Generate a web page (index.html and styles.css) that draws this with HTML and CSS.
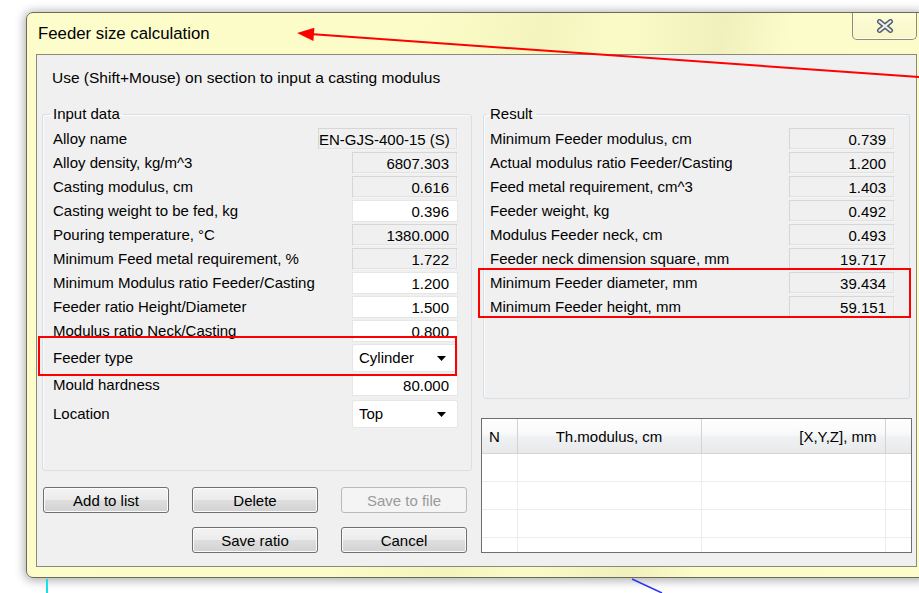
FILE: index.html
```html
<!DOCTYPE html>
<html lang="en">
<head>
<meta charset="utf-8">
<title>Feeder size calculation</title>
<link rel="stylesheet" href="styles.css">
</head>
<body>
<div class="desk">
  <div class="window">
    <div class="titlebar">
      <span class="title">Feeder size calculation</span>
      <button class="close" type="button" aria-label="Close">
        <svg width="18" height="14" viewBox="0 0 18 14">
          <path d="M3.5 2.5 L14.5 11.5 M14.5 2.5 L3.5 11.5" stroke="#56606b" stroke-width="5" stroke-linecap="round"/>
          <path d="M3.5 2.5 L14.5 11.5 M14.5 2.5 L3.5 11.5" stroke="#eef0f3" stroke-width="2.2" stroke-linecap="round"/>
        </svg>
      </button>
    </div>

    <div class="client">
      <p class="hint">Use (Shift+Mouse) on section to input a casting modulus</p>

      <div class="cols">
        <div class="col">
          <fieldset class="group input-group">
            <legend>Input data</legend>
            <div class="row"><span>Alloy name</span><span class="field ro wide">EN-GJS-400-15 (S)</span></div>
            <div class="row"><span>Alloy density, kg/m^3</span><span class="field ro">6807.303</span></div>
            <div class="row"><span>Casting modulus, cm</span><span class="field ro">0.616</span></div>
            <div class="row"><span>Casting weight to be fed, kg</span><span class="field">0.396</span></div>
            <div class="row"><span>Pouring temperature, °C</span><span class="field ro">1380.000</span></div>
            <div class="row"><span>Minimum Feed metal requirement, %</span><span class="field ro">1.722</span></div>
            <div class="row"><span>Minimum Modulus ratio Feeder/Casting</span><span class="field">1.200</span></div>
            <div class="row"><span>Feeder ratio Height/Diameter</span><span class="field">1.500</span></div>
            <div class="row"><span>Modulus ratio Neck/Casting</span><span class="field">0.800</span></div>
            <div class="row row-combo"><span>Feeder type</span>
              <span class="combo">Cylinder<svg class="drop" width="9" height="5" viewBox="0 0 9 5"><path d="M0 0 H9 L4.5 5 Z" fill="#000"/></svg></span>
            </div>
            <div class="row"><span>Mould hardness</span><span class="field">80.000</span></div>
            <div class="row row-combo row-last"><span>Location</span>
              <span class="combo">Top<svg class="drop" width="9" height="5" viewBox="0 0 9 5"><path d="M0 0 H9 L4.5 5 Z" fill="#000"/></svg></span>
            </div>
          </fieldset>

          <div class="buttons">
            <button type="button" class="btn b-add">Add to list</button>
            <button type="button" class="btn b-del">Delete</button>
            <button type="button" class="btn b-file" disabled>Save to file</button>
            <button type="button" class="btn b-ratio">Save ratio</button>
            <button type="button" class="btn b-cancel">Cancel</button>
          </div>
        </div>

        <div class="col">
          <fieldset class="group result-group">
            <legend>Result</legend>
            <div class="row"><span>Minimum Feeder modulus, cm</span><span class="field ro">0.739</span></div>
            <div class="row"><span>Actual modulus ratio Feeder/Casting</span><span class="field ro">1.200</span></div>
            <div class="row"><span>Feed metal requirement, cm^3</span><span class="field ro">1.403</span></div>
            <div class="row"><span>Feeder weight, kg</span><span class="field ro">0.492</span></div>
            <div class="row"><span>Modulus Feeder neck, cm</span><span class="field ro">0.493</span></div>
            <div class="row"><span>Feeder neck dimension square, mm</span><span class="field ro">19.717</span></div>
            <div class="row"><span>Minimum Feeder diameter, mm</span><span class="field ro">39.434</span></div>
            <div class="row"><span>Minimum Feeder height, mm</span><span class="field ro">59.151</span></div>
          </fieldset>

          <div class="list-wrap">
            <table class="list">
              <colgroup><col class="c-n"><col class="c-mod"><col class="c-xyz"><col class="c-end"></colgroup>
              <thead>
                <tr><th class="h-n">N</th><th class="h-mod">Th.modulus, cm</th><th class="h-xyz">[X,Y,Z], mm</th><th></th></tr>
              </thead>
              <tbody>
                <tr><td></td><td></td><td></td><td></td></tr>
                <tr><td></td><td></td><td></td><td></td></tr>
                <tr><td></td><td></td><td></td><td></td></tr>
                <tr><td></td><td></td><td></td><td></td></tr>
              </tbody>
            </table>
          </div>
        </div>
      </div>

      <div class="mark mark-feeder"></div>
      <div class="mark mark-result"></div>
    </div>
  </div>

  <svg class="notes" width="919" height="593" viewBox="0 0 919 593">
    <line x1="930" y1="77.8" x2="310" y2="34" stroke="#ff0000" stroke-width="2"/>
    <polygon points="297,33 314.4,27.8 313.4,41" fill="#ff0000"/>
    <line x1="47" y1="579" x2="47" y2="593" stroke="#18e0e6" stroke-width="2"/>
    <line x1="632" y1="579" x2="662" y2="593" stroke="#2a36f0" stroke-width="1.5"/>
  </svg>
</div>
</body>
</html>
```

FILE: styles.css
```css
html, body {
  margin: 0;
  padding: 0;
}

body {
  width: 919px;
  height: 593px;
  overflow: hidden;
  background: #ffffff;
  font-family: "Liberation Sans", Arial, sans-serif;
  font-size: 15px;
  color: #000;
}

.desk {
  position: relative;
  width: 919px;
  height: 593px;
  box-sizing: border-box;
  padding: 12px 0 0 26px;
}

/* dialog frame */
.window {
  width: 900px;
  height: 566px;
  box-sizing: border-box;
  border: 1px solid #6b6b5a;
  border-radius: 7px;
  padding: 0 8px 10px 9px;
  display: flex;
  flex-direction: column;
  background: linear-gradient(100deg,
    #fdfdcb 0%, #fcfcc8 40%, #f4f4be 52%, #fbfbc8 60%,
    #eff0bb 70%, #fcfccb 77%, #fdfdcc 100%);
  box-shadow: 0 1px 10px 2px rgba(0, 0, 0, 0.3);
}

.titlebar {
  height: 41px;
  display: flex;
  align-items: center;
  padding-left: 2px;
}

.title {
  font-size: 16.8px;
  line-height: 20px;
  margin-top: 1px;
}

.close {
  margin-left: auto;
  align-self: flex-start;
  width: 65px;
  height: 27px;
  padding: 0;
  box-sizing: border-box;
  border: 1px solid #8e8d7a;
  border-top: none;
  border-radius: 0 0 5px 5px;
  background: linear-gradient(#fdfdd8, #f7f7c9);
  box-shadow: inset 0 -1px 0 #fffff0;
  display: flex;
  align-items: center;
  justify-content: center;
}

/* client area */
.client {
  position: relative;
  flex: 1;
  border: 1px solid #8a8a7a;
  background: #f0f0f0;
  padding: 0 4px 0 5px;
}

.hint {
  margin: 14px 0 0 10px;
  font-size: 15.5px;
  line-height: 18px;
}

.cols {
  display: grid;
  grid-template-columns: 430px 431px;
  column-gap: 9px;
  margin-top: 18px;
}

.col {
  display: flex;
  flex-direction: column;
}

.group {
  margin: 0;
  min-width: 0;
  box-sizing: border-box;
  border: 1px solid #d5dfe5;
  border-radius: 3px;
  box-shadow: inset 1px 1px 0 #fbfbfb;
}

.group legend {
  padding: 0 3px;
  margin-left: -3px;
  line-height: 18px;
}

.input-group {
  height: 366px;
  padding: 5px 13px 0 10px;
}

.result-group {
  height: 294px;
  margin: 0 2px;
  padding: 5px 14px 0 6px;
}

.row {
  display: flex;
  justify-content: space-between;
  align-items: center;
  height: 22px;
  margin-bottom: 2px;
  line-height: 18px;
  white-space: nowrap;
}

.row > span:first-child {
  margin-top: -1px;
}

.row-combo {
  height: 28px;
}

.row-last {
  margin-top: 4px;
}

.field {
  width: 106px;
  height: 22px;
  box-sizing: border-box;
  padding-right: 8px;
  text-align: right;
  line-height: 21px;
  background: #ffffff;
  border: 1px solid #e6e6e6;
}

.field.ro {
  background: #f0f0f0;
  border-color: #d6d6d6 #f4f4f4 #f4f4f4 #d6d6d6;
  box-shadow: inset -1px -1px 0 #e2e2e2;
}

.field.wide {
  width: 140px;
}

.combo {
  width: 106px;
  height: 28px;
  box-sizing: border-box;
  padding: 0 11px 0 6px;
  display: flex;
  align-items: center;
  justify-content: space-between;
  background: #ffffff;
  border: 1px solid #e6e6e6;
  border-radius: 2px;
}

/* buttons */
.buttons {
  display: grid;
  grid-template-columns: repeat(3, 126px);
  grid-auto-rows: 26px;
  column-gap: 23px;
  row-gap: 14px;
  margin-top: 16px;
  padding-left: 1px;
}

.btn {
  height: 26px;
  padding: 0;
  font-family: "Liberation Sans", Arial, sans-serif;
  font-size: 15px;
  color: #000;
  border: 1px solid #707070;
  border-radius: 3px;
  background: linear-gradient(#f3f3f3 0%, #ececec 48%, #dedede 52%, #d2d2d2 100%);
  box-shadow: inset 0 0 0 1px #fbfbfb;
}

.btn:disabled {
  color: #9a9a9a;
  border-color: #b7babc;
  background: #f4f4f4;
  box-shadow: none;
}

.b-ratio { grid-column: 2; grid-row: 2; }
.b-cancel { grid-column: 3; grid-row: 2; }

/* list of saved feeders */
.list-wrap {
  margin-top: 19px;
  height: 135px;
  box-sizing: border-box;
  border: 1px solid #6e6e6e;
  background: #ffffff;
  overflow: hidden;
}

.list {
  width: 100%;
  table-layout: fixed;
  border-collapse: collapse;
}

.c-n { width: 35px; }
.c-mod { width: 184px; }
.c-xyz { width: 184px; }

.list th {
  height: 34px;
  padding: 0;
  font-weight: normal;
  border-right: 1px solid #d3d3d3;
  border-bottom: 1px solid #d5d5d5;
  background: linear-gradient(#ffffff 0%, #f7f8f9 45%, #eef0f2 55%, #e8e9eb 100%);
  white-space: nowrap;
}

.list th:last-child {
  border-right: none;
}

.h-n { text-align: left; padding-left: 7px !important; }
.h-mod { text-align: center; }
.h-xyz { text-align: right; padding-right: 8px !important; }

.list td {
  height: 27px;
  padding: 0;
  border-right: 1px solid #ededed;
  border-bottom: 1px solid #ededed;
}

.list td:last-child {
  border-right: none;
}

/* highlight frames */
.mark {
  position: absolute;
  box-sizing: border-box;
  border: 2px solid #ff0000;
  pointer-events: none;
}

.mark-feeder {
  left: 1px;
  top: 281px;
  width: 419px;
  height: 40px;
}

.mark-result {
  left: 441px;
  top: 213px;
  width: 433px;
  height: 50px;
}

.notes {
  position: absolute;
  left: 0;
  top: 0;
  pointer-events: none;
}
```
